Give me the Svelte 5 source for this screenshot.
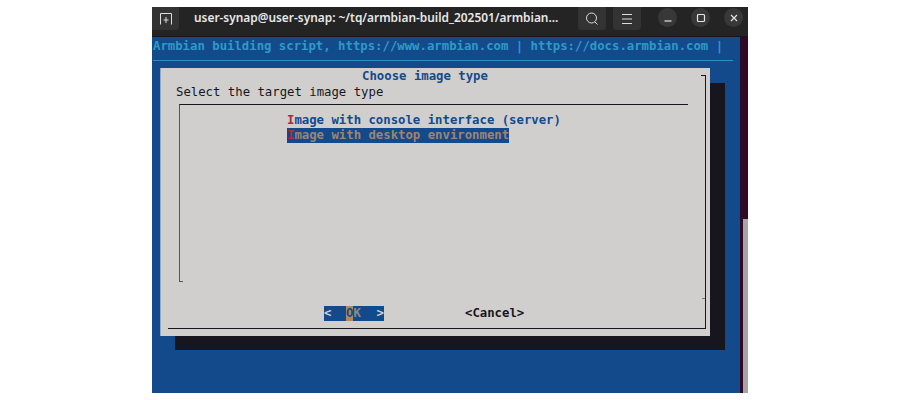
<script lang="ts">
  const banner = 'Armbian building script, https://www.armbian.com | https://docs.armbian.com |';
</script>

<div class="page">
  <div class="window">
    <header class="titlebar">
      <button class="tb-btn new-tab" type="button" aria-label="New tab">
        <svg width="14" height="14" viewBox="0 0 14 14" fill="none" stroke="currentColor" stroke-width="1" aria-hidden="true">
          <path d="M1.5 12.5V1.5h11v11"/>
          <path d="M7 5v6M4.5 8h5"/>
        </svg>
      </button>
      <div class="title">user-synap@user-synap: ~/tq/armbian-build_202501/armbian...</div>
      <button class="tb-btn search" type="button" aria-label="Search">
        <svg width="16" height="16" viewBox="0 0 16 16" fill="none" stroke="currentColor" stroke-width="1" aria-hidden="true">
          <circle cx="7.5" cy="7" r="5"/>
          <path d="M11 11l2.5 2.5"/>
        </svg>
      </button>
      <button class="tb-btn menu" type="button" aria-label="Menu">
        <svg width="14" height="12" viewBox="0 0 14 12" stroke="currentColor" stroke-width="1" aria-hidden="true">
          <path d="M2 1.5h10M2 6h10M2 10.5h10"/>
        </svg>
      </button>
      <div class="win-ctrls">
        <span class="ctrl">
          <svg width="10" height="10" viewBox="0 0 10 10" stroke="currentColor" stroke-width="1.2" aria-hidden="true"><path d="M1.5 8h7"/></svg>
        </span>
        <span class="ctrl">
          <svg width="10" height="10" viewBox="0 0 10 10" fill="none" stroke="currentColor" stroke-width="1.2" aria-hidden="true"><rect x="1.5" y="1.5" width="7" height="7" rx="1"/></svg>
        </span>
        <span class="ctrl">
          <svg width="10" height="10" viewBox="0 0 10 10" stroke="currentColor" stroke-width="1.2" aria-hidden="true"><path d="M2 2l6 6M8 2l-6 6"/></svg>
        </span>
      </div>
    </header>

    <div class="body">
      <div class="terminal">
        <div class="banner">{banner}</div>
        <div class="rule"></div>

        <div class="shadow"></div>
        <div class="dialog">
          <div class="frame"></div>
          <div class="dlg-title">Choose image type</div>
          <div class="dlg-prompt">Select the target image type</div>
          <div class="list-box">
            <div class="item-row"><span class="item"><span class="hot">I</span>mage with console interface (server)</span></div>
            <div class="item-row"><span class="item selected"><span class="hot">I</span>mage with desktop environment</span></div>
          </div>
          <div class="buttons">
            <span class="ok"><span>&lt;</span><span class="ok-label"><span class="ok-o">O</span>K</span><span>&gt;</span></span>
            <span class="cancel">&lt;Cancel&gt;</span>
          </div>
        </div>
      </div>
      <div class="gutter"><div class="thumb"></div></div>
    </div>
  </div>
</div>

<style>
  :global(body) {
    margin: 0;
    background: #fff;
  }

  .page {
    width: 900px;
    height: 400px;
    padding: 7px 0 0 152px;
    box-sizing: border-box;
    overflow: hidden;
  }

  .window {
    width: 596px;
    height: 386px;
    display: flex;
    flex-direction: column;
  }

  /* Title bar */
  .titlebar {
    height: 30px;
    flex-shrink: 0;
    box-sizing: border-box;
    display: flex;
    align-items: flex-start;
    background: #242424;
    border-bottom: 1px solid #1a141a;
    color: #e8e8e8;
    font-family: "Noto Sans", sans-serif;
  }

  .tb-btn {
    height: 23px;
    padding: 0;
    border: 0;
    border-radius: 0 0 4px 4px;
    background: #333333;
    color: #dcdcdc;
    display: flex;
    align-items: center;
    justify-content: center;
  }

  .new-tab {
    width: 27px;
    border-radius: 0 0 4px 0;
  }

  .title {
    width: 384px;
    margin-left: 15px;
    line-height: 21px;
    font-size: 11.9px;
    font-weight: 600;
    white-space: nowrap;
    overflow: hidden;
  }

  .search {
    width: 28px;
  }

  .menu {
    width: 28px;
    margin-left: 7px;
  }

  .win-ctrls {
    display: flex;
    gap: 14px;
    margin-left: 17px;
    padding-top: 1px;
  }

  .ctrl {
    width: 19px;
    height: 19px;
    border-radius: 50%;
    background: #383838;
    color: #e4e4e4;
    display: flex;
    align-items: center;
    justify-content: center;
  }

  /* Terminal */
  .body {
    flex: 1;
    display: flex;
    min-height: 0;
  }

  .terminal {
    position: relative;
    width: 588px;
    background: #134a8c;
    font-family: "DejaVu Sans Mono", monospace;
    font-size: 12.3px;
    line-height: 15px;
  }

  .banner {
    padding: 2px 0 0 1px;
    color: #2f9ac6;
    font-weight: 600;
    white-space: pre;
  }

  .rule {
    height: 1px;
    margin: 6px 7px 0 1px;
    background: #2a8fbc;
  }

  .gutter {
    width: 8px;
    background: #300a24;
    position: relative;
  }

  .thumb {
    position: absolute;
    left: 3px;
    right: 0;
    top: 182px;
    bottom: 0;
    background: #a8a4a6;
  }

  .shadow {
    position: absolute;
    left: 23px;
    top: 46px;
    width: 550px;
    height: 267px;
    background: #17161f;
  }

  .dialog {
    position: absolute;
    left: 8px;
    top: 31px;
    width: 550px;
    height: 268px;
    box-sizing: border-box;
    background: #d0cfcd;
    border-left: 1px solid #8fa6c4;
    color: #17161f;
    font-weight: 400;
  }

  /* right and bottom edge of the dialog box, with its two small ticks */
  .frame {
    position: absolute;
    left: 7px;
    top: 7px;
    width: 538px;
    height: 254px;
    box-sizing: border-box;
    border-right: 1px solid #17161f;
    border-bottom: 1px solid #17161f;
  }

  .frame::before {
    content: '';
    position: absolute;
    right: 0;
    top: 0;
    width: 4px;
    height: 1px;
    background: #17161f;
  }

  .frame::after {
    content: '';
    position: absolute;
    right: 0;
    top: 223px;
    width: 3px;
    height: 1px;
    background: #777;
  }

  .dlg-title {
    height: 15px;
    padding-top: 1px;
    margin-right: 21px;
    text-align: center;
    color: #134a8c;
    font-weight: 700;
  }

  .dlg-prompt {
    padding-left: 15px;
    padding-top: 1px;
  }

  .list-box {
    position: relative;
    box-sizing: border-box;
    margin: 4px 22px 0 18px;
    height: 178px;
    border-top: 1px solid #17161f;
    border-left: 1px solid #555;
    padding-top: 8px;
    padding-left: 107px;
  }

  .list-box::after {
    content: '';
    position: absolute;
    left: 0;
    bottom: 0;
    width: 3px;
    height: 1px;
    background: #555;
  }

  .item-row {
    height: 15px;
  }

  .item {
    display: inline-block;
    color: #134a8c;
    font-weight: 700;
  }

  .hot {
    color: #b3273a;
  }

  .selected {
    background: #134a8c;
    color: #a08470;
  }

  .buttons {
    position: relative;
    height: 15px;
    margin-top: 24px;
  }

  .ok {
    position: absolute;
    left: 163px;
    top: 0;
    width: 60px;
    height: 15px;
    display: flex;
    justify-content: space-between;
    background: #134a8c;
    color: #d0cfcd;
    font-weight: 700;
  }

  .ok-label {
    position: absolute;
    left: 22px;
    color: #8a8a90;
  }

  .ok-o {
    display: inline-block;
    background: #b08a5c;
    color: #134a8c;
  }

  .cancel {
    position: absolute;
    left: 304px;
    top: 0;
    font-weight: 700;
  }
</style>
